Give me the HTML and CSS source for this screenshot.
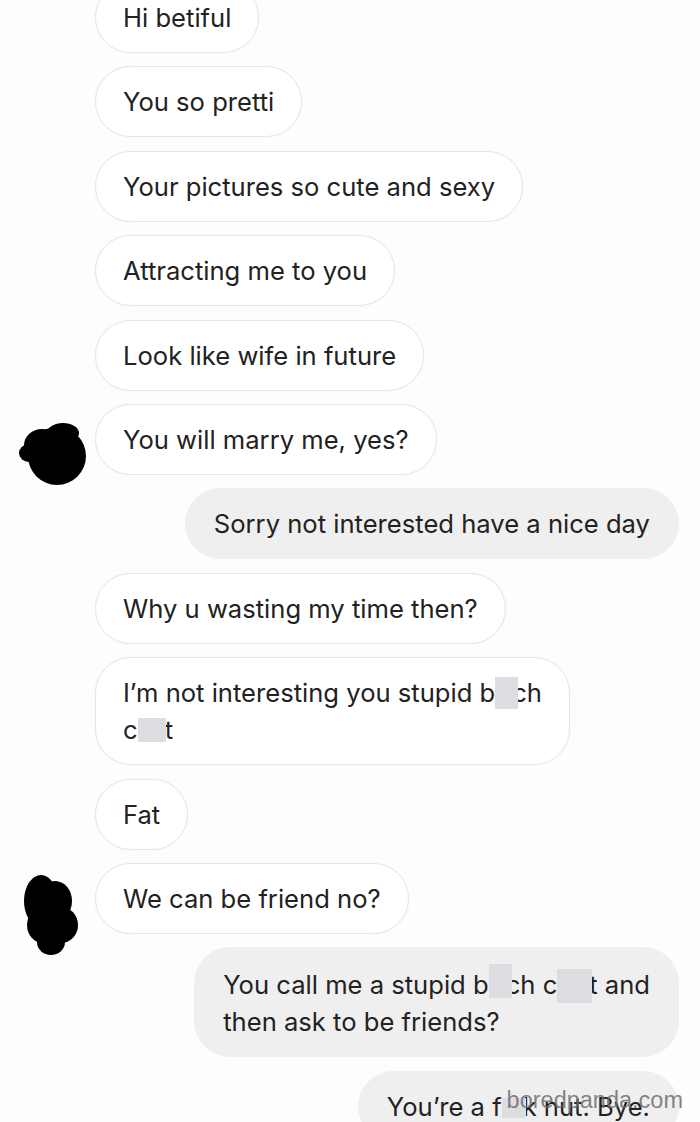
FILE: index.html
```html
<!DOCTYPE html>
<html>
<head>
<meta charset="utf-8">
<link rel="stylesheet" href="styles.css">
</head>
<body>
<div class="thread">
  <div class="row in"><div class="slot"></div><div class="bubble">Hi betiful</div></div>
  <div class="row in"><div class="slot"></div><div class="bubble">You so pretti</div></div>
  <div class="row in"><div class="slot"></div><div class="bubble">Your pictures so cute and sexy</div></div>
  <div class="row in"><div class="slot"></div><div class="bubble">Attracting me to you</div></div>
  <div class="row in"><div class="slot"></div><div class="bubble">Look like wife in future</div></div>
  <div class="row in">
    <div class="slot">
      <svg class="av av1" width="70" height="66" viewBox="0 0 70 66">
        <g fill="#000">
          <circle cx="40" cy="36" r="29"/>
          <ellipse cx="25" cy="25" rx="18" ry="16"/>
          <ellipse cx="12" cy="33" rx="10" ry="9"/>
          <ellipse cx="46" cy="13" rx="16" ry="10"/>
        </g>
      </svg>
    </div>
    <div class="bubble">You will marry me, yes?</div>
  </div>
  <div class="row out"><div class="bubble grey">Sorry not interested have a nice day</div></div>
  <div class="row in"><div class="slot"></div><div class="bubble">Why u wasting my time then?</div></div>
  <div class="row in"><div class="slot"></div><div class="bubble">I’m not interesting you stupid b<span class="cen cen-a"></span>ch<br>c<span class="cen cen-b"></span>t</div></div>
  <div class="row in"><div class="slot"></div><div class="bubble">Fat</div></div>
  <div class="row in">
    <div class="slot">
      <svg class="av av2" width="60" height="85" viewBox="0 0 60 85">
        <g fill="#000">
          <ellipse cx="20" cy="30" rx="17" ry="26"/>
          <ellipse cx="34" cy="30" rx="17" ry="20"/>
          <ellipse cx="40" cy="54" rx="17" ry="18"/>
          <ellipse cx="22" cy="54" rx="16" ry="18"/>
          <ellipse cx="30" cy="71" rx="14" ry="13"/>
        </g>
      </svg>
    </div>
    <div class="bubble">We can be friend no?</div>
  </div>
  <div class="row out"><div class="bubble grey">You call me a stupid b<span class="cen cen-c"></span>ch c<span class="cen cen-d"></span>t and<br>then ask to be friends?</div></div>
  <div class="row out"><div class="bubble grey">You’re a f<span class="cen cen-e"></span>k nut. Bye.</div></div>
</div>
<div class="watermark">boredpanda.com</div>
</body>
</html>
```
FILE: styles.css
```css
html, body {
  margin: 0;
  padding: 0;
  background: #fdfdfd;
  overflow: hidden;
}
body {
  width: 700px;
  height: 1122px;
  position: relative;
  font-family: "Inter", "Liberation Sans", sans-serif;
  color: #222222;
}
.thread {
  display: flex;
  flex-direction: column;
  gap: 13.4px;
  margin-top: -18px;
}
.row {
  display: flex;
  align-items: flex-start;
}
.row.out {
  justify-content: flex-end;
  padding-right: 21px;
}
.slot {
  width: 95px;
  flex: none;
  display: flex;
}
.bubble {
  box-sizing: border-box;
  background: #ffffff;
  border: 1px solid #e6e6e6;
  box-shadow: 0 0 2px rgba(0,0,0,0.05);
  border-radius: 36px;
  padding: 16px 27px;
  font-size: 25.6px;
  line-height: 37px;
  white-space: nowrap;
}
.bubble.grey {
  background: #efefef;
  border-color: #efefef;
  box-shadow: none;
  padding-left: 28px;
  padding-right: 28px;
}
.cen {
  display: inline-block;
  position: relative;
  background: #dcdde0;
}
.cen-a { width: 23px; height: 32px; vertical-align: -7px; margin-right: -6px; }
.cen-b { width: 28px; height: 24px; vertical-align: -3px; margin-right: -1px; }
.cen-c { width: 23px; height: 34px; vertical-align: -4px; margin-right: -6px; }
.cen-d { width: 35px; height: 34px; vertical-align: -9px; margin-right: -3px; }
.cen-e { width: 24px; height: 20px; vertical-align: -2px; margin-right: -3px; }
.av1 { margin: 16px 0 -11px 17px; }
.av2 { margin: 8px 0 -22px 21px; }
.watermark {
  position: absolute;
  right: 17px;
  bottom: 8px;
  font-family: "Liberation Sans", sans-serif;
  font-size: 23.5px;
  color: rgba(110,110,110,0.85);
}
```
